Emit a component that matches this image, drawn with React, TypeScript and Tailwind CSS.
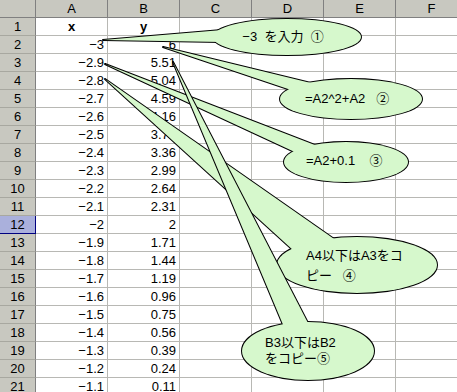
const rows: [string, string][] = [
    ['x', 'y'],
    ['−3', '6'],
    ['−2.9', '5.51'],
    ['−2.8', '5.04'],
    ['−2.7', '4.59'],
    ['−2.6', '4.16'],
    ['−2.5', '3.75'],
    ['−2.4', '3.36'],
    ['−2.3', '2.99'],
    ['−2.2', '2.64'],
    ['−2.1', '2.31'],
    ['−2', '2'],
    ['−1.9', '1.71'],
    ['−1.8', '1.44'],
    ['−1.7', '1.19'],
    ['−1.6', '0.96'],
    ['−1.5', '0.75'],
    ['−1.4', '0.56'],
    ['−1.3', '0.39'],
    ['−1.2', '0.24'],
    ['−1.1', '0.11'],
]

const columns = ['A', 'B', 'C', 'D', 'E', 'F']

const FONT = '"Liberation Sans", "Noto Sans CJK JP", sans-serif'
const FILL = '#d6f8cc'

interface CalloutProps {
    cx: number
    cy: number
    rx: number
    ry: number
    tail: string
    lines: { x: number; y: number; text: string; anchor?: 'start' | 'middle' }[]
}

const Callout: React.FC<CalloutProps> = ({ cx, cy, rx, ry, tail, lines }) => {
    return (
        <g>
            <polygon points={tail} fill={FILL} stroke="#000" strokeWidth={2} strokeLinejoin="round" />
            <ellipse cx={cx} cy={cy} rx={rx} ry={ry} fill={FILL} stroke="#000" strokeWidth={2} />
            <polygon points={tail} fill={FILL} />
            <ellipse cx={cx} cy={cy} rx={rx} ry={ry} fill={FILL} />
            {lines.map((l, i) => (
                <text
                    key={i}
                    x={l.x}
                    y={l.y}
                    fontSize={13}
                    fontFamily={FONT}
                    textAnchor={l.anchor ?? 'start'}
                    fill="#000"
                    className="whitespace-pre"
                >
                    {l.text}
                </text>
            ))}
        </g>
    )
}

export default function App() {
    return (
        <div className="relative h-[392px] w-[457px] overflow-hidden bg-white font-['Liberation_Sans',sans-serif] text-[13px] text-black">
            <div className="grid grid-cols-[36px_repeat(6,72px)] auto-rows-[18px]">
                <div className="border-r border-b border-[#808080] bg-[#c8c8c0]" />
                {columns.map((c) => (
                    <div
                        key={c}
                        className="flex items-center justify-center border-r border-b border-[#808080] bg-[#c8c8c0] text-[13px] leading-none"
                    >
                        {c}
                    </div>
                ))}
                {rows.map(([a, b], i) => {
                    const n = i + 1
                    const selected = n === 12
                    const head = i === 0
                    return [
                        <div
                            key={`h${n}`}
                            className={
                                selected
                                    ? 'flex items-center justify-center border-r border-b border-[#000080] bg-[#aab0dc] leading-none'
                                    : 'flex items-center justify-center border-r border-b border-r-[#808080] border-b-[#a8a8a0] bg-[#c8c8c0] leading-none'
                            }
                        >
                            {n}
                        </div>,
                        <div
                            key={`a${n}`}
                            className={
                                head
                                    ? 'flex items-center justify-center border-r border-b border-[#b8b8b4] font-bold leading-none'
                                    : 'flex items-center justify-end border-r border-b border-[#b8b8b4] pr-[3px] leading-none'
                            }
                        >
                            {a}
                        </div>,
                        <div
                            key={`b${n}`}
                            className={
                                head
                                    ? 'flex items-center justify-center border-r border-b border-[#b8b8b4] font-bold leading-none'
                                    : 'flex items-center justify-end border-r border-b border-[#b8b8b4] pr-[3px] leading-none'
                            }
                        >
                            {b}
                        </div>,
                        ...[0, 1, 2, 3].map((k) => (
                            <div key={`e${n}-${k}`} className="border-r border-b border-[#b8b8b4]" />
                        )),
                    ]
                })}
            </div>

            <svg className="pointer-events-none absolute inset-0" width={457} height={392}>
                <Callout
                    cx={287}
                    cy={37}
                    rx={74}
                    ry={18}
                    tail="103,40 222,30 222,42"
                    lines={[{ x: 283, y: 41, text: '−3  を入力  ①', anchor: 'middle' }]}
                />
                <Callout
                    cx={351}
                    cy={99}
                    rx={71}
                    ry={20}
                    tail="163,47 315,84 294,91"
                    lines={[{ x: 305, y: 103, text: '=A2^2+A2   ②' }]}
                />
                <Callout
                    cx={346}
                    cy={162}
                    rx={62}
                    ry={20}
                    tail="105,64 320,147 299,154"
                    lines={[{ x: 306, y: 165, text: '=A2+0.1    ③' }]}
                />
                <Callout
                    cx={357}
                    cy={265}
                    rx={80}
                    ry={28}
                    tail="105,79 337,241 294,251"
                    lines={[
                        { x: 306, y: 260, text: 'A4以下はA3をコ' },
                        { x: 306, y: 280, text: 'ピー   ④' },
                    ]}
                />
                <Callout
                    cx={308}
                    cy={351}
                    rx={66}
                    ry={29}
                    tail="173,62 284,327 309,325"
                    lines={[
                        { x: 265, y: 347, text: 'B3以下はB2' },
                        { x: 265, y: 363, text: 'をコピー⑤' },
                    ]}
                />
            </svg>
        </div>
    )
}
